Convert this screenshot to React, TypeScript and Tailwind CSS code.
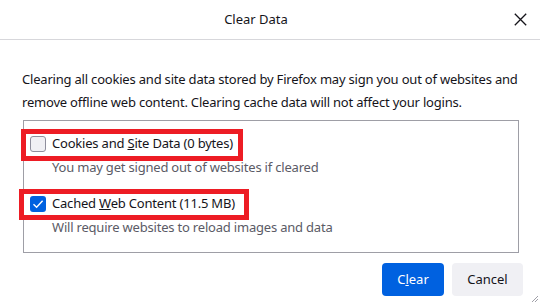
import React, { useState } from 'react';

const font = { fontFamily: '"Noto Sans", "Open Sans", sans-serif' };

interface ItemProps {
  label: React.ReactNode;
  hint: string;
  checked: boolean;
  onToggle: () => void;
  boxClass: string;
}

const Item = ({ label, hint, checked, onToggle, boxClass }: ItemProps) => (
  <div className="flex flex-col">
    <label className="relative flex items-center gap-[6px] h-6 cursor-pointer">
      <span className={`pointer-events-none absolute border-[5px] border-[#ed1c24] ${boxClass}`} />
      <button
        type="button"
        onClick={onToggle}
        className={
          checked
            ? 'flex items-center justify-center w-4 h-4 rounded-[3px] bg-[#0061e0]'
            : 'w-4 h-4 rounded-[3px] bg-[#f0f0f4] border border-[#8f8f9d]'
        }
      >
        {checked && (
          <svg width="12" height="12" viewBox="0 0 12 12" fill="none">
            <path d="M1.5 6.2 L4.6 9.2 L10.6 2.8" stroke="white" strokeWidth="1.4" />
          </svg>
        )}
      </button>
      <span className="text-[13px] tracking-[-0.2px] text-[#15141a]">{label}</span>
    </label>
    <p className="pl-[22px] text-[13px] tracking-[-0.2px] leading-[22px] text-[#5b5b66]">{hint}</p>
  </div>
);

const App = () => {
  const [cookies, setCookies] = useState(false);
  const [cache, setCache] = useState(true);

  return (
    <div className="relative w-[540px] h-[304px] bg-white overflow-hidden" style={font}>
      <div className="flex items-center h-10 border-b border-[#d7d7db]">
        <h1 className="flex-1 text-center text-[13px] text-[#15141a] pl-[6px]">Clear Data</h1>
        <button className="w-7 h-7 mr-[6px] flex items-center justify-center text-[#15141a]">
          <svg width="13" height="13" viewBox="0 0 13 13">
            <path d="M0.8 0.8 L12.2 12.2 M12.2 0.8 L0.8 12.2" stroke="#15141a" strokeWidth="1.3" />
          </svg>
        </button>
      </div>

      <div className="pl-[22px] pr-[17px]">
        <p className="mt-7 text-[13px] tracking-[-0.2px] leading-[23px] text-[#15141a] whitespace-nowrap">
          Clearing all cookies and site data stored by Firefox may sign you out of websites and
          <br />
          remove offline web content. Clearing cache data will not affect your logins.
        </p>

        <div className="mt-[6px] ml-px mr-[4px] h-[133px] border border-[#9e9ea6] pt-[11px] pl-[6px] flex flex-col gap-[14px]">
          <Item
            label={<>Cookies and <u>S</u>ite Data (0 bytes)</>}
            hint="You may get signed out of websites if cleared"
            checked={cookies}
            onToggle={() => setCookies(!cookies)}
            boxClass="-left-[9px] -top-[3px] w-[222px] h-[32px]"
          />
          <Item
            label={<>Cached <u>W</u>eb Content (11.5 MB)</>}
            hint="Will require websites to reload images and data"
            checked={cache}
            onToggle={() => setCache(!cache)}
            boxClass="-left-[11px] -top-[3px] w-[230px] h-[31px]"
          />
        </div>

        <div className="flex justify-end gap-2 mt-[10px]">
          <button className="w-[62px] h-[33px] rounded-[4px] bg-[#0061e0] text-white text-[13px]">
            C<u>l</u>ear
          </button>
          <button className="w-[71px] h-[33px] rounded-[4px] bg-[#f0f0f4] text-[#15141a] text-[13px]">
            Cancel
          </button>
        </div>
      </div>

      <svg className="absolute right-[2px] bottom-[2px]" width="6" height="6" viewBox="0 0 6 6">
        <path d="M6 0 L0 6 M6 3 L3 6" stroke="#a0a0a8" strokeWidth="1" />
      </svg>
    </div>
  );
};

export default App;
